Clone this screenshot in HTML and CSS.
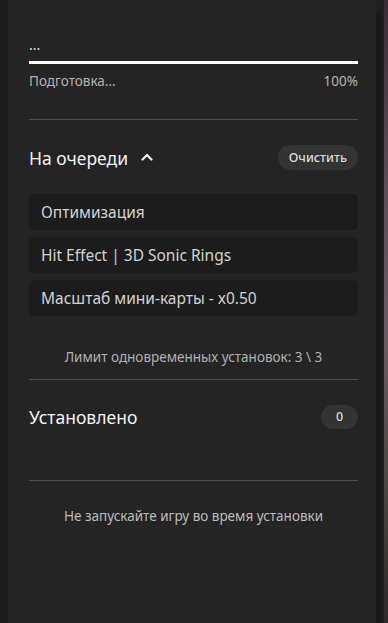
FILE: index.html
```html
<!DOCTYPE html>
<html lang="ru">
<head>
    <meta charset="UTF-8">
    <meta name="viewport" content="width=device-width, initial-scale=1.0">
    <title>Установка модов</title>
    <link rel="stylesheet" href="styles.css">
</head>
<body>
<div class="page">
    <div class="edge"></div>

    <div class="panel">
        <div class="current-name">...</div>
        <div class="progress"><div class="progress-fill"></div></div>
        <div class="progress-info">
            <span>Подготовка...</span>
            <span>100%</span>
        </div>

        <hr class="divider divider-top">

        <div class="section-head queue-head">
            <div class="section-title">
                На очереди
                <svg class="chevron" width="12" height="8" viewBox="0 0 12 8">
                    <polyline points="1.5,6.5 6,2 10.5,6.5" fill="none" stroke="#f2f2f2" stroke-width="2.2" stroke-linecap="round" stroke-linejoin="round"/>
                </svg>
            </div>
            <button class="pill clear-btn" type="button">Очистить</button>
        </div>

        <ul class="queue">
            <li class="queue-item">Оптимизация</li>
            <li class="queue-item">Hit Effect | 3D Sonic Rings</li>
            <li class="queue-item">Масштаб мини-карты - x0.50</li>
        </ul>

        <div class="limit">Лимит одновременных установок: 3 \ 3</div>

        <hr class="divider divider-limit">

        <div class="section-head installed-head">
            <div class="section-title">Установлено</div>
            <span class="pill count">0</span>
        </div>

        <hr class="divider divider-installed">

        <div class="hint">Не запускайте игру во время установки</div>
    </div>

    <div class="rail"><div class="rail-track"></div></div>
    <div class="backdrop"></div>
</div>
</body>
</html>
```

FILE: styles.css
```css
body {
    margin: 0;
    padding: 0;
    background-color: #242424;
    font-family: 'Noto Sans', 'Open Sans', sans-serif;
    overflow: hidden;
}

.page {
    display: flex;
    height: 623px;
}

.edge {
    width: 8px;
    background-color: #1d1d1d;
}

.panel {
    width: 329px;
    padding: 37px 18px 0 21px;
    background-color: #242424;
}

.current-name {
    color: #e8e8e8;
    font-size: 14px;
    line-height: 16px;
}

.progress {
    margin-top: 8px;
    height: 3px;
    background-color: #3a3a3a;
}

.progress-fill {
    width: 100%;
    height: 100%;
    background-color: #ffffff;
}

.progress-info {
    display: flex;
    justify-content: space-between;
    margin-top: 9px;
    color: #b4b4b4;
    font-size: 13.5px;
    line-height: 16px;
}

.divider {
    border: none;
    height: 1px;
    margin: 0;
    background-color: #4c4c4c;
}

.divider-top {
    margin-top: 30px;
}

.section-head {
    display: flex;
    align-items: center;
    justify-content: space-between;
}

.queue-head {
    margin-top: 25px;
    height: 25px;
}

.installed-head {
    margin-top: 25px;
    height: 24px;
}

.section-title {
    display: flex;
    align-items: center;
    color: #f2f2f2;
    font-size: 17.5px;
    line-height: 24px;
}

.chevron {
    margin-left: 13px;
    margin-top: -2px;
}

.pill {
    background-color: #333333;
    border-radius: 13px;
    color: #dcdcdc;
    font-family: inherit;
    font-size: 12.5px;
    font-weight: 500;
}

.clear-btn {
    border: none;
    height: 25px;
    padding: 0 11px;
    cursor: pointer;
}

.count {
    width: 37px;
    height: 24px;
    line-height: 24px;
    text-align: center;
}

.queue {
    list-style: none;
    margin: 24px 0 0 0;
    padding: 0;
    display: flex;
    flex-direction: column;
    gap: 7px;
}

.queue-item {
    height: 36px;
    line-height: 36px;
    padding: 0 12px;
    background-color: #1c1c1c;
    border-radius: 5px;
    color: #d2d2d2;
    font-size: 15.5px;
}

.limit {
    margin-top: 32px;
    text-align: center;
    color: #b0b0b0;
    font-size: 13.5px;
    line-height: 18px;
}

.divider-limit {
    margin-top: 13px;
}

.divider-installed {
    margin-top: 51px;
}

.hint {
    margin-top: 26px;
    text-align: center;
    color: #bcbcbc;
    font-size: 13.5px;
    line-height: 18px;
}

.rail {
    width: 8px;
    background-color: #202020;
}

.rail-track {
    margin-top: 12px;
    width: 5px;
    height: 611px;
    background-color: #191919;
}

.backdrop {
    flex: 1;
    background: linear-gradient(180deg, #3a2f36 0%, #5c4f58 30%, #6a5c62 55%, #4e4a48 75%, #2c2a2a 100%);
}
```
